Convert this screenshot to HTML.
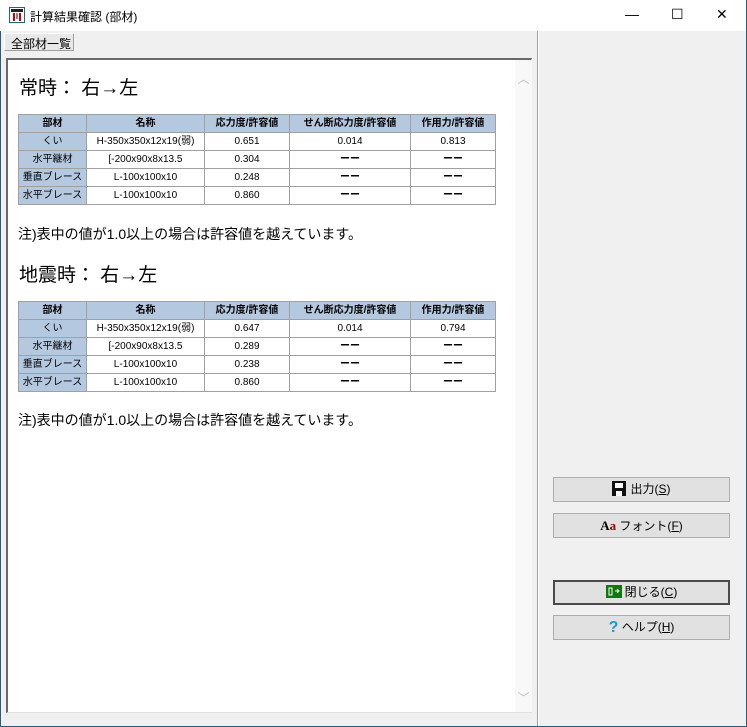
<!DOCTYPE html>
<html><head><meta charset="utf-8"><style>
*{margin:0;padding:0;box-sizing:border-box}
body{width:747px;height:727px;overflow:hidden;background:#f0f0f0;font-family:"Liberation Sans","Noto Sans CJK JP",sans-serif;position:relative}
.win{position:absolute;left:0;top:0;width:747px;height:727px;border:1px solid #2b5a7a;border-top:none}
.title{position:absolute;left:0;top:0;width:746px;height:31px;background:#fff;font-size:12px}
.title .t{position:absolute;left:30px;top:8px;color:#000}
.ctl{position:absolute;top:6px;font-size:14px;color:#000}
.tab{position:absolute;left:4px;top:33px;width:70px;height:18px;border:1px solid #fff;border-right-color:#a0a0a0;border-bottom-color:#a0a0a0;background:#e8e8e8;font-size:12px;padding:1px 0 0 6px}
.panel{position:absolute;left:6px;top:58px;width:526px;height:655px;background:#fff;border-top:2px solid #6a6a6a;border-left:2px solid #6a6a6a;border-right:1px solid #e0e0e0;border-bottom:1px solid #e0e0e0}
.sb{position:absolute;left:507px;top:0;width:17px;height:652px;background:#f8f8f8;color:#c0c0c0;font-size:12px;text-align:center}
.div{position:absolute;left:537px;top:31px;width:2px;height:695px;background:#a0a0a0;border-right:1px solid #fff}
h2{position:absolute;font-size:19px;font-weight:normal;color:#000}
.note{position:absolute;left:18px;font-size:14px;color:#000}
table{position:absolute;left:18px;border-collapse:collapse;font-size:10px;border:1px solid #808080}
td{border:1px solid #a0a0a0;height:18px;line-height:16px;text-align:center;vertical-align:middle;padding:0}
tr:first-child td{background:#b4c8e0;font-weight:bold}
td:first-child{background:#b4c8e0}
.btn{position:absolute;left:553px;width:177px;height:25px;background:#e1e1e1;border:1px solid #adadad;font-size:12px;text-align:center;line-height:23px}
.btn.def{border:2px solid #4a4a4a;line-height:21px}
</style></head><body>
<div class="win"></div>
<div class="title">
<svg style="position:absolute;left:9px;top:7px" width="16" height="16"><rect x="0.5" y="0.5" width="15" height="15" fill="#fff" stroke="#1a6a6a"/><rect x="2" y="2" width="12" height="3" fill="#222"/><rect x="4" y="6" width="2" height="8" fill="#c00"/><rect x="10" y="6" width="2" height="8" fill="#c00"/><rect x="7" y="6" width="2" height="6" fill="#888"/></svg>
<span class="t">計算結果確認 (部材)</span>
<span class="ctl" style="left:625px">—</span>
<span class="ctl" style="left:671px">☐</span>
<span class="ctl" style="left:716px">✕</span>
</div>
<div class="tab">全部材一覧</div>
<div class="panel">
<div class="sb"><div style="margin-top:10px">︿</div><div style="position:absolute;bottom:6px;width:17px">﹀</div></div>
</div>
<h2 style="left:19px;top:73px">常時：&nbsp;右→左</h2>
<table style="top:114px">
<colgroup><col style="width:68px"><col style="width:118px"><col style="width:85px"><col style="width:121px"><col style="width:85px"></colgroup>
<tr><td>部材</td><td>名称</td><td>応力度/許容値</td><td>せん断応力度/許容値</td><td>作用力/許容値</td></tr>
<tr><td>くい</td><td>H-350x350x12x19(弱)</td><td>0.651</td><td>0.014</td><td>0.813</td></tr>
<tr><td>水平継材</td><td>[-200x90x8x13.5</td><td>0.304</td><td><b>ーー</b></td><td><b>ーー</b></td></tr>
<tr><td>垂直ブレース</td><td>L-100x100x10</td><td>0.248</td><td><b>ーー</b></td><td><b>ーー</b></td></tr>
<tr><td>水平ブレース</td><td>L-100x100x10</td><td>0.860</td><td><b>ーー</b></td><td><b>ーー</b></td></tr>
</table>
<div class="note" style="top:224px">注)表中の値が1.0以上の場合は許容値を越えています。</div>
<h2 style="left:19px;top:260px">地震時：&nbsp;右→左</h2>
<table style="top:301px">
<colgroup><col style="width:68px"><col style="width:118px"><col style="width:85px"><col style="width:121px"><col style="width:85px"></colgroup>
<tr><td>部材</td><td>名称</td><td>応力度/許容値</td><td>せん断応力度/許容値</td><td>作用力/許容値</td></tr>
<tr><td>くい</td><td>H-350x350x12x19(弱)</td><td>0.647</td><td>0.014</td><td>0.794</td></tr>
<tr><td>水平継材</td><td>[-200x90x8x13.5</td><td>0.289</td><td><b>ーー</b></td><td><b>ーー</b></td></tr>
<tr><td>垂直ブレース</td><td>L-100x100x10</td><td>0.238</td><td><b>ーー</b></td><td><b>ーー</b></td></tr>
<tr><td>水平ブレース</td><td>L-100x100x10</td><td>0.860</td><td><b>ーー</b></td><td><b>ーー</b></td></tr>
</table>
<div class="note" style="top:410px">注)表中の値が1.0以上の場合は許容値を越えています。</div>
<div class="div"></div>
<div class="btn" style="top:477px"><svg width="14" height="15" style="vertical-align:-3px;margin-right:4px"><rect x="0" y="0" width="14" height="15" fill="#111"/><rect x="3" y="2" width="8" height="5" fill="#fff"/><rect x="4" y="10" width="6" height="5" fill="#fff"/></svg>出力(<u>S</u>)</div>
<div class="btn" style="top:513px"><span style="font-family:'Liberation Serif',serif;font-weight:bold;font-size:13px">A<span style="color:#900">a</span></span> フォント(<u>F</u>)</div>
<div class="btn def" style="top:580px"><svg width="16" height="13" style="vertical-align:-2px;margin-right:3px"><rect width="16" height="13" fill="#0a7a0a"/><path d="M3 3h3v7H3zM9 6h4M11 4l2 2-2 2" stroke="#fff" fill="none"/></svg>閉じる(<u>C</u>)</div>
<div class="btn" style="top:615px"><span style="color:#1a9ad0;font-weight:bold;font-size:16px;vertical-align:-1px">?</span> ヘルプ(<u>H</u>)</div>
</body></html>
